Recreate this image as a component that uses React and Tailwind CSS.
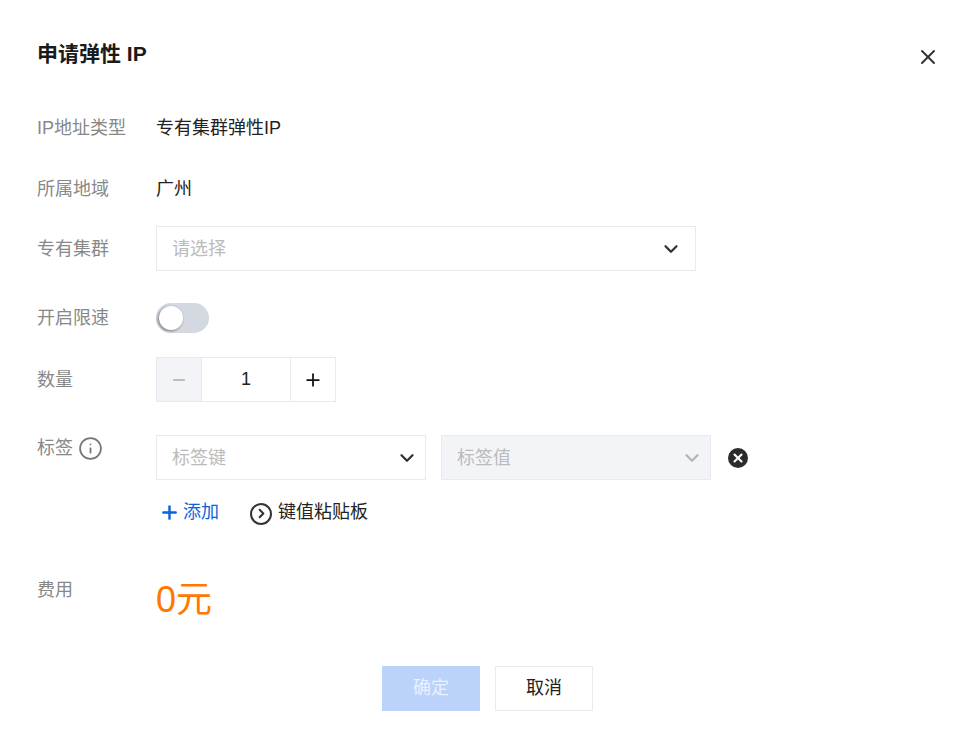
import React from 'react';
import { X, Minus, Plus, ChevronDown, ChevronRight, Info } from 'lucide-react';

const FONT = "font-['Liberation_Sans','Noto_Sans_CJK_SC',sans-serif]";

function Row({ label, className = '', labelClass = 'leading-[26px]', children }) {
  return (
    <div className={`flex ${className}`}>
      <div className={`w-[119px] shrink-0 text-[18px] text-[#888] ${labelClass}`}>{label}</div>
      <div className="flex-1">{children}</div>
    </div>
  );
}

function Select({ placeholder, width, disabled, padRight }) {
  return (
    <div className={`flex h-[45px] items-center justify-between border border-[#e7eaef] pl-[15px] text-[18px] text-[#bbb] ${padRight} ${width} ${disabled ? 'bg-[#f2f4f8]' : 'bg-white'}`}>
      <span className="pt-[2px]">{placeholder}</span>
      <ChevronDown size={22} strokeWidth={2.5} className={disabled ? 'text-[#b5b5b5]' : 'text-[#333]'} />
    </div>
  );
}

export default function App() {
  return (
    <div className={`relative min-h-[744px] w-[972px] bg-white pl-[37px] pt-[40px] text-[#111] ${FONT}`}>
      <h1 className="h-[28px] text-[21px] font-bold leading-[28px] text-[#1a1a1a]">申请弹性 IP</h1>
      <button className="absolute left-[916px] top-[45px] text-[#333]">
        <X size={24} strokeWidth={2} />
      </button>

      <Row label="IP地址类型" className="mt-[46px]" labelClass="leading-[28px]">
        <span className="block text-[18px] leading-[28px] text-[#222]">专有集群弹性IP</span>
      </Row>
      <Row label="所属地域" className="mt-[33px]" labelClass="leading-[28px]">
        <span className="block text-[18px] leading-[28px] text-[#222]">广州</span>
      </Row>
      <Row label="专有集群" className="mt-[23px] items-center">
        <Select placeholder="请选择" width="w-[540px]" padRight="pr-[13px]" />
      </Row>
      <Row label="开启限速" className="mt-[32px] items-center">
        <div className="flex h-[30px] w-[53px] items-center rounded-full bg-[#d3d8e1] pl-[3px]">
          <div className="h-[24px] w-[24px] rounded-full bg-white shadow-[-1px_1px_3px_rgba(0,0,0,0.45)]" />
        </div>
      </Row>
      <Row label="数量" className="mt-[24px] items-center">
        <div className="flex h-[45px] w-[180px] border border-[#e7eaef]">
          <div className="flex w-[45px] items-center justify-center border-r border-[#e7eaef] bg-[#f2f4f8] text-[#aaa]">
            <Minus size={18} strokeWidth={2.2} />
          </div>
          <div className="flex flex-1 items-center justify-center text-[18px] text-[#222]">1</div>
          <div className="flex w-[45px] items-center justify-center border-l border-[#e7eaef] text-[#111]">
            <Plus size={20} strokeWidth={2.1} />
          </div>
        </div>
      </Row>
      <Row
        label={
          <span className="flex items-center gap-[5px]">
            标签 <Info size={25} strokeWidth={1.7} className="text-[#777]" />
          </span>
        }
        className="mt-[33px]"
      >
        <div className="flex items-center">
          <Select placeholder="标签键" width="w-[270px]" padRight="pr-[7px]" />
          <div className="ml-[15px]">
            <Select placeholder="标签值" width="w-[270px]" padRight="pr-[7px]" disabled />
          </div>
          <div className="ml-[17px] flex h-[20px] w-[20px] items-center justify-center rounded-full bg-[#2b2b2b] text-white">
            <X size={14} strokeWidth={3.6} />
          </div>
        </div>
        <div className="mt-[19px] flex h-[26px] items-center text-[18px]">
          <Plus size={21} strokeWidth={2.8} className="ml-[3px] mt-[1px] text-[#0d62d9]" />
          <span className="ml-[3px] text-[#0d62d9]">添加</span>
          <div className="ml-[31px] mt-[3px] flex h-[22px] w-[22px] items-center justify-center rounded-full border-2 border-[#333] text-[#333]">
            <ChevronRight size={15} strokeWidth={3.2} />
          </div>
          <span className="ml-[6px] text-[#222]">键值粘贴板</span>
        </div>
      </Row>
      <Row label="费用" className="mt-[52px]">
        <span className="mt-[2px] block text-[36px] leading-[42px] text-[#ff7800]">0元</span>
      </Row>

      <div className="mt-[45px] flex w-[901px] justify-center gap-[15px] text-[18px]">
        <button className="h-[45px] w-[98px] bg-[#bbd3fb] text-[#e9f1fe]">确定</button>
        <button className="h-[45px] w-[98px] border border-[#e7eaef] bg-white text-[#222]">取消</button>
      </div>
    </div>
  );
}
